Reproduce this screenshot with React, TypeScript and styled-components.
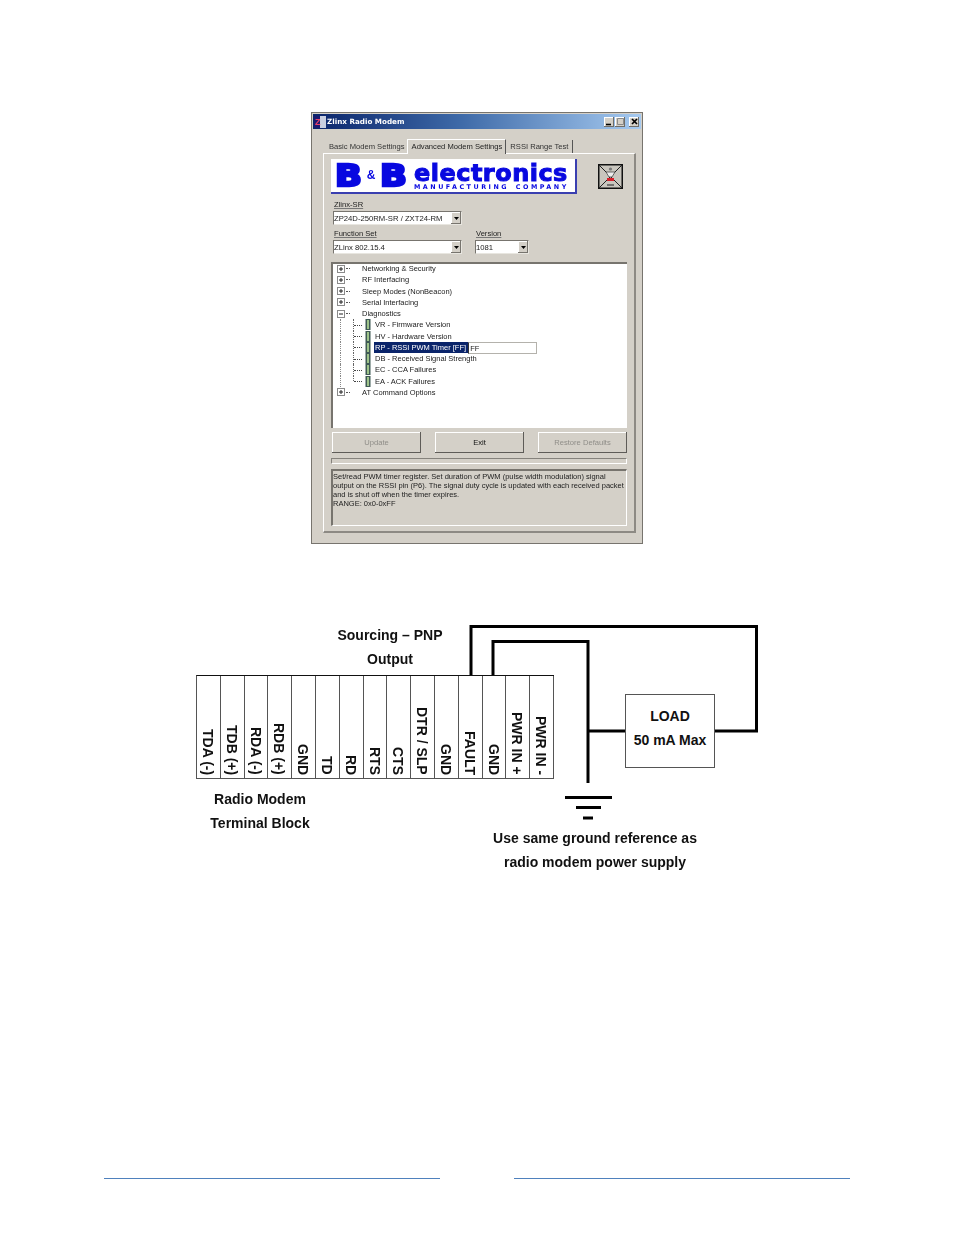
import React from 'react';
import styled, {createGlobalStyle} from 'styled-components';

const GlobalStyle = createGlobalStyle`
  html, body {
    margin: 0;
    padding: 0;
    background: #ffffff;
  }
`

const ui = '"Liberation Sans", Arial, sans-serif'

type TreeItem = { label: string, expanded?: boolean, children?: string[] }

const treeItems: TreeItem[] = [
    {label: 'Networking & Security'},
    {label: 'RF Interfacing'},
    {label: 'Sleep Modes (NonBeacon)'},
    {label: 'Serial Interfacing'},
    {
        label: 'Diagnostics',
        expanded: true,
        children: [
            'VR - Firmware Version',
            'HV - Hardware Version',
            'RP - RSSI PWM Timer [FF]',
            'DB - Received Signal Strength',
            'EC - CCA Failures',
            'EA - ACK Failures',
        ],
    },
    {label: 'AT Command Options'},
]

const pins = ['TDA (-)', 'TDB (+)', 'RDA (-)', 'RDB (+)', 'GND', 'TD', 'RD', 'RTS', 'CTS', 'DTR / SLP', 'GND', 'FAULT', 'GND', 'PWR IN +', 'PWR IN -']

const TitleButtons = () => (
    <TitleBtnGroup>
        <TitleBtn>
            <svg width="9" height="9" viewBox="0 0 9 9"><path d="M1 7.5H6" stroke="#000" strokeWidth="1.6"/></svg>
        </TitleBtn>
        <TitleBtn>
            <svg width="9" height="9" viewBox="0 0 9 9"><path d="M1.5 1.5H7.5V7.5H1.5Z" fill="none" stroke="#8a8a8a" strokeWidth="1"/></svg>
        </TitleBtn>
        <CloseBtn>
            <svg width="9" height="9" viewBox="0 0 9 9"><path d="M2 2L7 7M7 2L2 7" stroke="#000" strokeWidth="1.7"/></svg>
        </CloseBtn>
    </TitleBtnGroup>
)

const ComboBox = (props: { value: string, width: number }) => (
    <Combo $width={props.width}>
        <ComboValue>{props.value}</ComboValue>
        <ComboArrow>
            <svg width="5" height="3" viewBox="0 0 5 3"><path d="M0 0H5L2.5 3Z" fill="#000"/></svg>
        </ComboArrow>
    </Combo>
)

const Expander = (props: { open?: boolean }) => (
    <svg width="8" height="8" viewBox="0 0 8 8">
        <rect x="0.5" y="0.5" width="7" height="7" fill="#fff" stroke="#8a8a8a"/>
        <path d={props.open ? 'M2 4H6' : 'M2 4H6M4 2V6'} stroke="#222"/>
    </svg>
)

const LeafIcon = () => (
    <svg width="6" height="11" viewBox="0 0 6 11">
        <rect x="0.5" y="0" width="5" height="11" fill="#3f5a55"/>
        <rect x="2" y="1" width="2" height="9" fill="#9fc48a"/>
    </svg>
)

const WarningIcon = () => (
    <svg width="25" height="25" viewBox="0 0 25 25">
        <rect x="0.75" y="0.75" width="23.5" height="23.5" fill="#c9c6be" stroke="#111" strokeWidth="1.5"/>
        <path d="M1 1L24 24M24 1L1 24" stroke="#222" strokeWidth="1"/>
        <path d="M8 8H17L14 13H11Z" fill="#eee" stroke="#333" strokeWidth="0.7"/>
        <circle cx="12.5" cy="5" r="1.6" fill="#777"/>
        <rect x="9" y="14" width="7" height="3" fill="#d81f2a"/>
        <path d="M9 21H16" stroke="#555" strokeWidth="1.5"/>
    </svg>
)

const App = () => {
    return (
        <Page>
            <GlobalStyle/>
            <Window>
                <TitleBar>
                    <AppIcon>Z</AppIcon>
                    <TitleText>Zlinx Radio Modem</TitleText>
                    <TitleButtons/>
                </TitleBar>
                <Body>
                    <Tabs>
                        <Tab>Basic Modem Settings</Tab>
                        <ActiveTab>Advanced Modem Settings</ActiveTab>
                        <Tab $bordered>RSSI Range Test</Tab>
                    </Tabs>
                    <Panel>
                        <LogoRow>
                            <Logo>
                                <LogoLetter>B</LogoLetter>
                                <LogoAmp>&amp;</LogoAmp>
                                <LogoLetter>B</LogoLetter>
                                <LogoWords>
                                    <LogoName>electronics</LogoName>
                                    <LogoSub>MANUFACTURING COMPANY</LogoSub>
                                </LogoWords>
                            </Logo>
                            <WarningIcon/>
                        </LogoRow>
                        <FieldLabel>Zlinx-SR</FieldLabel>
                        <ComboBox value="ZP24D-250RM-SR / ZXT24-RM" width={129}/>
                        <FieldRow>
                            <Field>
                                <FieldLabel>Function Set</FieldLabel>
                                <ComboBox value="ZLinx 802.15.4" width={129}/>
                            </Field>
                            <Field>
                                <FieldLabel>Version</FieldLabel>
                                <ComboBox value="1081" width={54}/>
                            </Field>
                        </FieldRow>
                        <Tree>
                            {treeItems.map(item => (
                                <React.Fragment key={item.label}>
                                    <TreeRow>
                                        <Expander open={item.expanded}/>
                                        <RootDash/>
                                        <RootLabel>{item.label}</RootLabel>
                                    </TreeRow>
                                    {item.children && item.children.map((child, i) => (
                                        <TreeRow key={child}>
                                            <Trunk/>
                                            <Branch $last={i === item.children!.length - 1}/>
                                            <LeafIcon/>
                                            {child.startsWith('RP')
                                                ? <>
                                                    <SelectedLabel>{child}</SelectedLabel>
                                                    <EditBox>FF</EditBox>
                                                </>
                                                : <LeafLabel>{child}</LeafLabel>}
                                        </TreeRow>
                                    ))}
                                </React.Fragment>
                            ))}
                        </Tree>
                        <ButtonRow>
                            <Button $disabled>Update</Button>
                            <Button>Exit</Button>
                            <Button $disabled>Restore Defaults</Button>
                        </ButtonRow>
                        <Progress/>
                        <Description>
                            Set/read PWM timer register. Set duration of PWM (pulse width modulation) signal<br/>
                            output on the RSSI pin (P6). The signal duty cycle is updated with each received packet<br/>
                            and is shut off when the timer expires.<br/>
                            RANGE: 0x0-0xFF
                        </Description>
                    </Panel>
                </Body>
            </Window>

            <Diagram>
                <Wires width="580" height="265" viewBox="0 0 580 265">
                    <path d="M281 61V11.5H566.5V116H524" fill="none" stroke="#000" strokeWidth="3"/>
                    <path d="M303 61V26.5H398V168" fill="none" stroke="#000" strokeWidth="3"/>
                    <path d="M398 116H436" stroke="#000" strokeWidth="3"/>
                    <path d="M375 182.5H422" stroke="#000" strokeWidth="3"/>
                    <path d="M386 192.5H411" stroke="#000" strokeWidth="3"/>
                    <path d="M393 203H403" stroke="#000" strokeWidth="3"/>
                </Wires>
                <TerminalBlock>
                    {pins.map((pin, i) => (
                        <Pin key={i}><PinText>{pin}</PinText></Pin>
                    ))}
                </TerminalBlock>
                <LoadBox>
                    <span>LOAD</span>
                    <span>50 mA Max</span>
                </LoadBox>
                <Caption $x={200} $y={8}>Sourcing – PNP<br/>Output</Caption>
                <Caption $x={70} $y={172}>Radio Modem<br/>Terminal Block</Caption>
                <Caption $x={405} $y={211}>Use same ground reference as<br/>radio modem power supply</Caption>
            </Diagram>

            <Footer>
                <FooterRule/>
                <FooterRule/>
            </Footer>
        </Page>
    )
};

export default App;

const Page = styled.div`
  width: 954px;
  height: 1235px;
  padding-top: 112px;
  box-sizing: border-box;
  background: #fff;
  overflow: hidden;
`
const Window = styled.div`
  width: 332px;
  height: 432px;
  margin: 0 auto;
  box-sizing: border-box;
  border: 1px solid #77746e;
  padding: 1px;
  display: flex;
  flex-direction: column;
  background: #d4d0c8;
  font-family: ${ui};
  color: #222;
  filter: blur(0.3px);
`
const TitleBar = styled.div`
  height: 15px;
  flex: none;
  display: flex;
  align-items: center;
  padding: 0 1px;
  background: linear-gradient(90deg, #0a246a 0%, #3e6aa8 45%, #a6caf0 100%);
`
const AppIcon = styled.div`
  width: 12px;
  height: 12px;
  padding-left: 1px;
  box-sizing: border-box;
  background: linear-gradient(90deg, #1b1a70 0%, #1b1a70 50%, #c9cfe0 50%);
  color: #e8406a;
  font: bold 9px/12px ${ui};
`
const TitleText = styled.div`
  margin-left: 1px;
  color: #fff;
  font: bold 7.2px/15px "DejaVu Sans", sans-serif;
  flex: 1;
`
const TitleBtnGroup = styled.div`
  display: flex;
  gap: 1px;
  margin-right: 1px;
`
const TitleBtn = styled.div`
  width: 10px;
  height: 10px;
  display: flex;
  align-items: center;
  justify-content: center;
  background: #d4d0c8;
  box-shadow: inset -1px -1px 0 #6f6d68, inset 1px 1px 0 #fff;
`
const CloseBtn = styled(TitleBtn)`
  margin-left: 3px;
`
const Body = styled.div`
  flex: 1;
  padding: 9px 5px 9px 10px;
  display: flex;
  flex-direction: column;
`
const Tabs = styled.div`
  height: 15px;
  flex: none;
  display: flex;
  align-items: flex-end;
  font-size: 7.6px;
`
const Tab = styled.div<{ $bordered?: boolean }>`
  height: 13px;
  line-height: 14px;
  padding: 0 ${props => props.$bordered ? '4px 0 4px' : '2px 0 6px'};
  color: #333;
  white-space: nowrap;
  border-right: ${props => props.$bordered ? '1px solid #555' : 'none'};
`
const ActiveTab = styled.div`
  height: 15px;
  line-height: 13px;
  margin: 0 0 -1px 0;
  padding: 0 3px 0 4px;
  white-space: nowrap;
  background: #d4d0c8;
  position: relative;
  z-index: 1;
  border-top: 1px solid #fff;
  border-left: 1px solid #fff;
  border-right: 1px solid #555;
  box-sizing: border-box;
`
const Panel = styled.div`
  flex: 1;
  box-sizing: border-box;
  padding: 5px 7px 5px 7px;
  border-top: 1px solid #fff;
  border-left: 1px solid #fff;
  border-right: 2px solid #8d8a84;
  border-bottom: 2px solid #8d8a84;
`
const LogoRow = styled.div`
  display: flex;
  align-items: center;
  gap: 21px;
  height: 35px;
`
const Logo = styled.div`
  width: 246px;
  height: 35px;
  box-sizing: border-box;
  display: flex;
  align-items: center;
  background: #fff;
  border-right: 2px solid #3a3fb0;
  border-bottom: 2px solid #3a3fb0;
  color: #0808e0;
  padding-left: 4px;
`
const LogoLetter = styled.div`
  width: 27px;
  font: bold 31px/31px "DejaVu Sans", sans-serif;
  text-align: center;
  -webkit-text-stroke: 2.6px #0808e0;
  transform: scaleX(1.14);
`
const LogoAmp = styled.div`
  width: 18px;
  text-align: center;
  font: bold 12px/27px ${ui};
`
const LogoWords = styled.div`
  align-self: flex-start;
  margin: 4px 0 0 7px;
  display: flex;
  flex-direction: column;
  align-items: flex-start;
`
const LogoName = styled.div`
  font: bold 23px/20px "DejaVu Sans", sans-serif;
  -webkit-text-stroke: 1px #0808e0;
  transform: scaleX(1.04);
  transform-origin: left center;
  letter-spacing: 0.5px;
  white-space: nowrap;
`
const LogoSub = styled.div`
  margin-top: 1px;
  font: bold 6.4px/6px "DejaVu Sans", sans-serif;
  letter-spacing: 2.5px;
  word-spacing: 2px;
  white-space: nowrap;
`
const FieldLabel = styled.div`
  height: 11px;
  margin: 6px 0 0 3px;
  font-size: 7.6px;
  line-height: 10px;
  text-decoration: underline;
  text-decoration-color: #777;
`
const FieldRow = styled.div`
  display: flex;
  gap: 11px;
`
const Field = styled.div`
  & > div:first-child {
    margin-top: 4px;
  }
`
const Combo = styled.div<{ $width: number }>`
  width: ${props => props.$width}px;
  height: 14px;
  margin-left: 2px;
  box-sizing: border-box;
  display: flex;
  align-items: center;
  background: #fff;
  border-top: 1px solid #77746e;
  border-left: 1px solid #77746e;
  border-right: 1px solid #e8e6e0;
  border-bottom: 1px solid #e8e6e0;
`
const ComboValue = styled.div`
  flex: 1;
  font-size: 7.7px;
  white-space: nowrap;
  overflow: hidden;
`
const ComboArrow = styled.div`
  width: 10px;
  height: 12px;
  display: flex;
  align-items: center;
  justify-content: center;
  background: #d4d0c8;
  box-shadow: inset -1px -1px 0 #77746e, inset 1px 1px 0 #fff;
`
const Tree = styled.div`
  height: 166px;
  margin-top: 8px;
  box-sizing: border-box;
  padding: 0 0 0 4px;
  background: #fff;
  border-top: 2px solid #77746e;
  border-left: 2px solid #77746e;
  font-size: 7.5px;
`
const TreeRow = styled.div`
  height: 11.25px;
  display: flex;
  align-items: center;
  white-space: nowrap;

  &:first-child {
    margin-top: -1px;
  }
`
const RootDash = styled.div`
  width: 4px;
  margin-left: 1px;
  border-top: 1px dotted #555;
`
const RootLabel = styled.div`
  margin-left: 12px;
`
const Trunk = styled.div`
  width: 13px;
  height: 100%;
  box-sizing: border-box;
  margin-left: 3px;
  border-left: 1px dotted #888;
`
const Branch = styled.div<{ $last: boolean }>`
  width: 9px;
  height: ${props => props.$last ? '50%' : '100%'};
  align-self: flex-start;
  box-sizing: border-box;
  margin-right: 3px;
  border-left: 1px dotted #666;
  position: relative;

  &::after {
    content: '';
    position: absolute;
    left: 0;
    top: ${props => props.$last ? '100%' : '50%'};
    width: 8px;
    border-top: 1px dotted #444;
  }
`
const LeafLabel = styled.div`
  margin-left: 4px;
`
const SelectedLabel = styled.div`
  margin-left: 3px;
  padding: 0 2px 0 1px;
  line-height: 11px;
  background: #0a246a;
  color: #fff;
`
const EditBox = styled.div`
  width: 69px;
  height: 12px;
  box-sizing: border-box;
  margin-top: 1px;
  padding-left: 1px;
  line-height: 11px;
  border: 1px solid #b4b2ac;
  border-left-color: #333;
  background: #fff;
`
const ButtonRow = styled.div`
  display: flex;
  justify-content: space-between;
  margin: 4px 0 0 1px;
`
const Button = styled.div<{ $disabled?: boolean }>`
  width: 89px;
  height: 21px;
  text-align: center;
  font-size: 7.6px;
  line-height: 21px;
  color: ${props => props.$disabled ? '#8f8d88' : '#111'};
  background: #d4d0c8;
  box-shadow: inset -1px -1px 0 #5e5c58, inset 1px 1px 0 #fff;
`
const Progress = styled.div`
  height: 6px;
  margin-top: 5px;
  box-sizing: border-box;
  border-top: 1px solid #85827c;
  border-left: 1px solid #85827c;
  border-right: 1px solid #fff;
  border-bottom: 1px solid #fff;
`
const Description = styled.div`
  height: 57px;
  margin-top: 5px;
  padding: 1px 0 0 0;
  box-sizing: border-box;
  font-size: 7.5px;
  line-height: 9px;
  white-space: nowrap;
  color: #222;
  border-top: 2px solid #77746e;
  border-left: 2px solid #77746e;
  border-right: 1px solid #fff;
  border-bottom: 1px solid #fff;
`
const Diagram = styled.div`
  position: relative;
  width: 580px;
  height: 265px;
  margin: 71px 0 0 190px;
  font-family: ${ui};
  font-weight: bold;
  font-size: 14px;
  color: #111;
  filter: blur(0.25px);
`
const Wires = styled.svg`
  position: absolute;
  left: 0;
  top: 0;
`
const TerminalBlock = styled.div`
  position: absolute;
  left: 6px;
  top: 60px;
  width: 358px;
  height: 104px;
  box-sizing: border-box;
  display: flex;
  border-top: 1px solid #111;
  border-bottom: 1px solid #555;
  border-left: 1px solid #555;
`
const Pin = styled.div`
  flex: 1;
  box-sizing: border-box;
  display: flex;
  align-items: flex-end;
  justify-content: flex-start;
  padding: 0 0 3px 3px;
  border-right: 1px solid #555;
`
const PinText = styled.div`
  writing-mode: vertical-rl;
  line-height: 16px;
  white-space: nowrap;
`
const LoadBox = styled.div`
  position: absolute;
  left: 435px;
  top: 79px;
  width: 90px;
  height: 74px;
  box-sizing: border-box;
  padding-top: 9px;
  display: flex;
  flex-direction: column;
  align-items: center;
  line-height: 24px;
  background: #fff;
  border: 1px solid #555;
`
const Caption = styled.div<{ $x: number, $y: number }>`
  position: absolute;
  left: ${props => props.$x}px;
  top: ${props => props.$y}px;
  transform: translateX(-50%);
  text-align: center;
  line-height: 24px;
  white-space: nowrap;
`
const Footer = styled.div`
  margin-top: 298px;
  padding: 0 104px;
  display: flex;
  justify-content: space-between;
`
const FooterRule = styled.div`
  width: 336px;
  height: 1px;
  background: #4f81bd;
`
